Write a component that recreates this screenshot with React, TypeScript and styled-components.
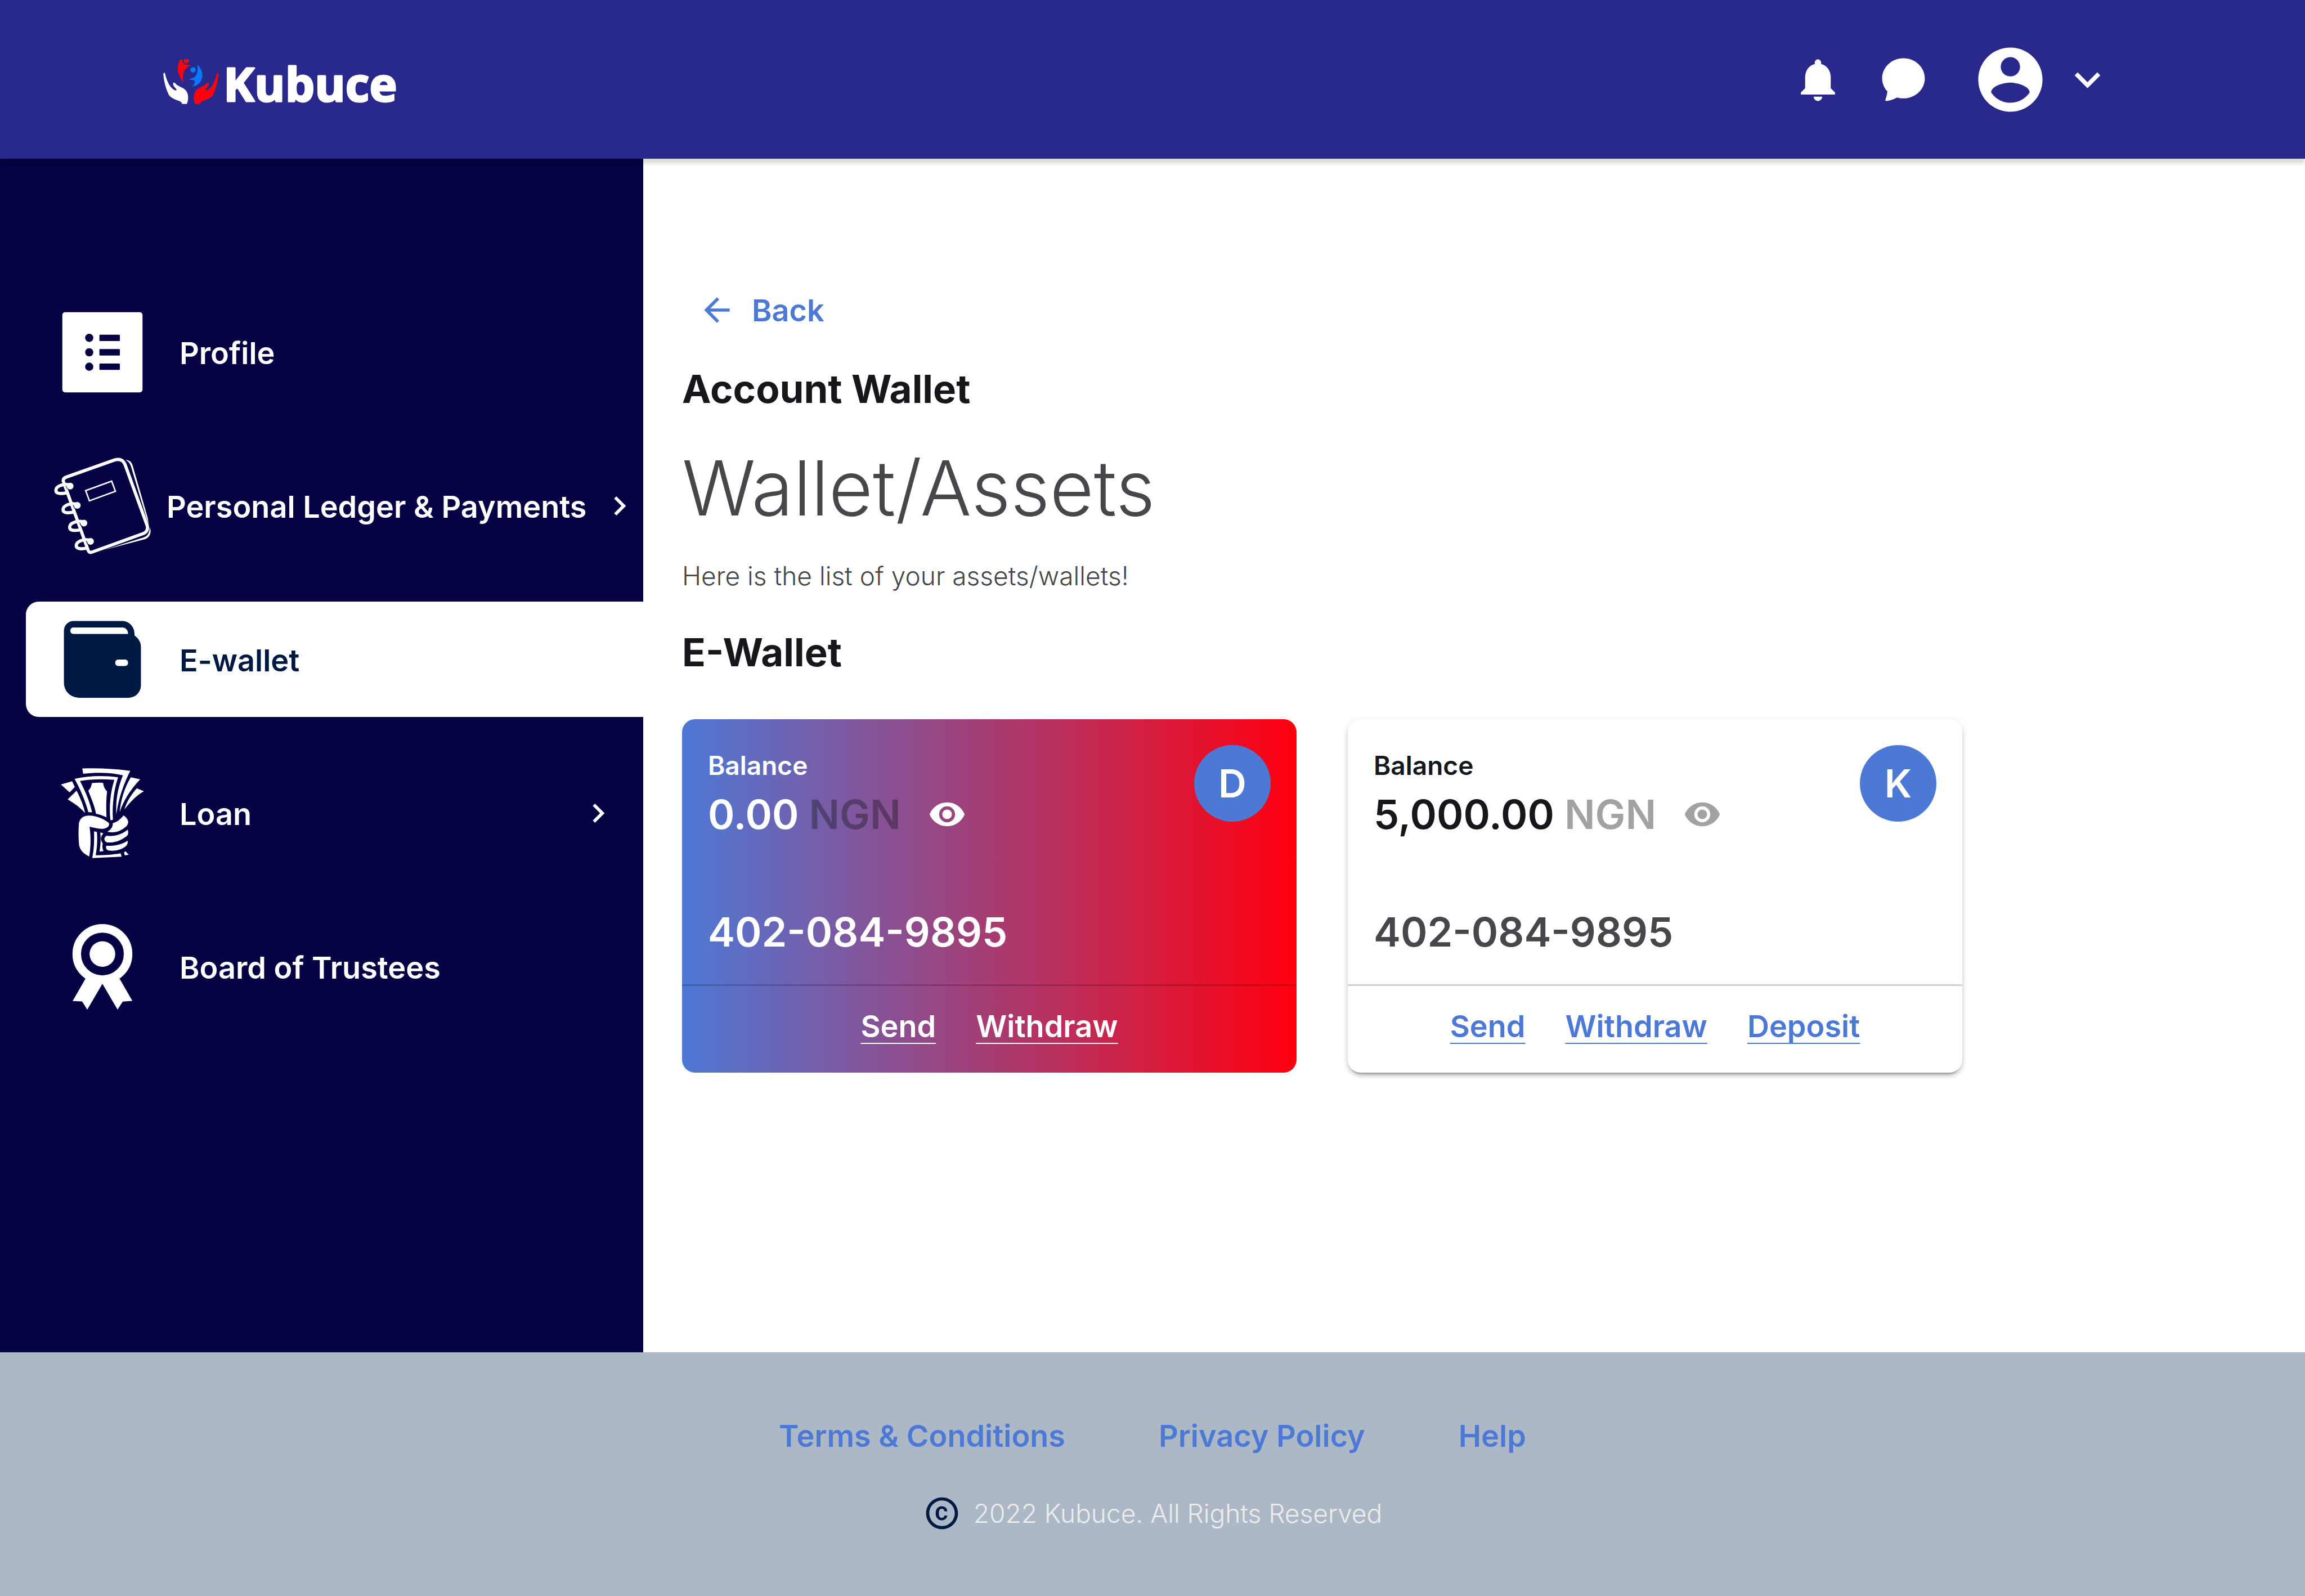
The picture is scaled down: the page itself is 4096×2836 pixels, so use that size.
import React from "react";
import styled, { createGlobalStyle, css } from "styled-components";

const color = {
  header: "#29288d",
  sidebar: "#050344",
  navy: "#001943",
  link: "#4d79d6",
  ink: "#16171b",
  body: "#46474b",
  muted: "rgba(22, 23, 27, 0.4)",
  footer: "#adb8c6",
  copyright: "#ececec",
  red: "#ff000f",
};

const font = { display: "135px", amount: "72px", title: "69px", label: "54px", text: "46px" };

const GlobalStyle = createGlobalStyle`
  *, *::before, *::after { box-sizing: border-box; }
  body {
    margin: 0;
    background: #fff;
    color: ${color.ink};
    font-family: Inter, "Liberation Sans", sans-serif;
  }
  h1, h2, p { margin: 0; }
  a { color: inherit; text-decoration: none; }
  button { border: 0; padding: 0; background: none; color: inherit; font: inherit; cursor: pointer; }
  svg { display: block; flex: none; }
`;

const Page = styled.div`
  display: flex;
  flex-direction: column;
  min-height: 100vh;
`;

const Header = styled.header`
  position: relative;
  z-index: 1;
  display: flex;
  align-items: center;
  justify-content: space-between;
  height: 282px;
  padding: 0 341px 0 290px;
  background: ${color.header};
  color: #fff;
  box-shadow: 0 8px 6px rgba(0, 0, 0, 0.15);
`;

const Brand = styled.a`
  display: flex;
  padding-top: 8px;
`;

const HeaderActions = styled.div`
  display: flex;
  align-items: center;
  gap: 61px;
`;

const IconButton = styled.button`
  display: flex;
`;

const AccountButton = styled.button`
  display: flex;
  align-items: center;
  gap: 23px;
  margin-left: 15px;
`;

const Body = styled.div`
  display: flex;
  flex: 1;
`;

const Sidebar = styled.nav`
  display: flex;
  flex: none;
  flex-direction: column;
  gap: 68px;
  width: 1143px;
  padding: 241px 0 68px 46px;
  background: ${color.sidebar};
`;

const NavItem = styled.a<{ $active?: boolean; $tight?: boolean }>`
  display: flex;
  align-items: center;
  gap: ${(p) => (p.$tight ? "19px" : "42px")};
  height: 205px;
  padding: 0 ${(p) => (p.$tight ? "8px" : "46px")} 0 41px;
  border-radius: 23px 0 0 23px;
  color: #fff;
  font-size: ${font.label};
  font-weight: 600;
  white-space: nowrap;
  ${(p) =>
    p.$active &&
    css`
      background: #fff;
      color: ${color.navy};
    `}
  > svg:last-child {
    margin-left: auto;
  }
`;

const NavLabel = styled.span`
  padding-top: 4px;
`;

const Main = styled.main`
  flex: 1;
  min-width: 0;
  padding: 235px 68px 68px 69px;
`;

const BackLink = styled.a`
  display: inline-flex;
  align-items: center;
  gap: 28px;
  height: 68px;
  padding-left: 28px;
  color: ${color.link};
  font-size: ${font.label};
  font-weight: 600;
`;

const Heading = styled.h2`
  margin-top: 60px;
  font-size: ${font.title};
  font-weight: 700;
  line-height: 84px;
`;

const PageTitle = styled.h1`
  margin-top: 56px;
  color: ${color.body};
  font-size: ${font.display};
  font-weight: 300;
  line-height: 156px;
`;

const Intro = styled.p`
  margin-top: 44px;
  color: ${color.body};
  font-size: ${font.text};
  font-weight: 300;
  line-height: 68px;
`;

const Cards = styled.section`
  display: flex;
  flex-wrap: wrap;
  gap: 91px;
  margin-top: 77px;
`;

const Card = styled.article<{ $featured?: boolean }>`
  flex: 0 1 1092px;
  border-radius: 23px;
  background: #fff;
  box-shadow: 0 9px 3px -6px rgba(0, 0, 0, 0.2), 0 6px 6px rgba(0, 0, 0, 0.14),
    0 3px 14px rgba(0, 0, 0, 0.12);
  ${(p) =>
    p.$featured &&
    css`
      background: linear-gradient(90deg, ${color.link}, ${color.red});
      box-shadow: none;
      color: #fff;
    `}
`;

const CardTop = styled.div`
  display: flex;
  align-items: flex-start;
  justify-content: space-between;
  padding: 46px 46px 51px;
`;

const BalanceLabel = styled.p`
  font-size: ${font.text};
  font-weight: 600;
  line-height: 72px;
`;

const Amount = styled.div`
  display: flex;
  align-items: center;
  margin-top: 6px;
  font-size: ${font.amount};
  font-weight: 600;
  line-height: 90px;
`;

const Currency = styled.span`
  margin-left: 18px;
  color: ${color.muted};
`;

const EyeButton = styled.button<{ $light?: boolean }>`
  display: flex;
  margin-left: 48px;
  color: ${(p) => (p.$light ? "#fff" : color.muted)};
`;

const AccountNumber = styled.p<{ $light?: boolean }>`
  margin-top: 122px;
  color: ${(p) => (p.$light ? "#fff" : color.body)};
  font-size: ${font.amount};
  font-weight: 600;
  line-height: 84px;
`;

const Avatar = styled.div`
  display: flex;
  align-items: center;
  justify-content: center;
  width: 136px;
  height: 136px;
  border-radius: 50%;
  background: ${color.link};
  color: #fff;
  font-size: ${font.title};
  font-weight: 600;
`;

const CardActions = styled.div<{ $light?: boolean }>`
  display: flex;
  justify-content: center;
  gap: 71px;
  padding: 42px 46px 52px;
  border-top: 3px solid rgba(0, 0, 0, 0.18);
  color: ${(p) => (p.$light ? "#fff" : color.link)};
`;

const ActionLink = styled.a`
  font-size: ${font.label};
  font-weight: 600;
  line-height: 60px;
  text-decoration: underline;
  text-decoration-thickness: 2px;
  text-decoration-skip-ink: none;
  text-underline-offset: 10px;
`;

const Footer = styled.footer`
  display: flex;
  flex-direction: column;
  align-items: center;
  gap: 71px;
  padding: 117px 68px 113px;
  background: ${color.footer};
`;

const FooterLinks = styled.nav`
  display: flex;
  gap: 166px;
  color: ${color.link};
  font-size: ${font.label};
  font-weight: 600;
  line-height: 64px;
`;

const Copyright = styled.p`
  display: flex;
  align-items: center;
  gap: 22px;
  color: ${color.copyright};
  font-size: ${font.text};
  font-weight: 300;
  line-height: 68px;
  svg {
    color: ${color.navy};
  }
`;

const WordMark = styled.text`
  font-family: "Open Sans", sans-serif;
  font-size: 83px;
  font-weight: 700;
  fill: #fff;
  stroke: #fff;
  stroke-width: 3;
  stroke-linejoin: round;
`;

const paths = {
  bell: "M12 22c1.1 0 2-.9 2-2h-4c0 1.1.89 2 2 2zm6-6v-5c0-3.07-1.64-5.64-4.5-6.32V4c0-.83-.67-1.5-1.5-1.5s-1.5.67-1.5 1.5v.68C7.63 5.36 6 7.92 6 11v5l-2 2v1h16v-1l-2-2z",
  chat: "M12 2c5.5 0 10 4.2 10 9.4s-4.5 9.4-10 9.4c-1 0-2.2-.1-3-.4-1.5.9-3.5 1.5-5 1.6-.4 0-.6-.3-.5-.6.5-1.1.8-2.4.95-3.9C3 16 2 13.8 2 11.4 2 6.2 6.5 2 12 2z",
  account:
    "M12 2C6.48 2 2 6.48 2 12s4.48 10 10 10 10-4.48 10-10S17.52 2 12 2zm0 3c1.66 0 3 1.34 3 3s-1.34 3-3 3-3-1.34-3-3 1.34-3 3-3zm0 14.2c-2.5 0-4.71-1.28-6-3.22.03-1.99 4-3.08 6-3.08 1.99 0 5.97 1.09 6 3.08-1.29 1.94-3.5 3.22-6 3.22z",
  down: "M16.59 8.59L12 13.17 7.41 8.59 6 10l6 6 6-6z",
  right: "M10 6L8.59 7.41 13.17 12l-4.58 4.59L10 18l6-6z",
  back: "M20 11H7.83l5.59-5.59L12 4l-8 8 8 8 1.41-1.41L7.83 13H20v-2z",
  eye: "M12 4.5C7 4.5 2.73 7.61 1 12c1.73 4.39 6 7.5 11 7.5s9.27-3.11 11-7.5c-1.73-4.39-6-7.5-11-7.5zM12 17c-2.76 0-5-2.24-5-5s2.24-5 5-5 5 2.24 5 5-2.24 5-5 5zm0-8c-1.66 0-3 1.34-3 3s1.34 3 3 3 3-1.34 3-3-1.34-3-3-3z",
  copyright:
    "M10.08 10.86c.05-.33.16-.62.3-.87s.34-.46.59-.62c.24-.15.54-.22.91-.23.23.01.44.05.63.13.2.09.38.21.52.36s.25.33.34.53.13.42.14.64h1.79c-.02-.47-.11-.9-.28-1.29s-.4-.73-.7-1.01-.66-.5-1.08-.66-.88-.23-1.39-.23c-.65 0-1.22.11-1.7.34s-.88.53-1.2.92-.56.84-.71 1.36S8 11.29 8 11.87v.27c0 .58.08 1.12.23 1.64s.39.97.71 1.35.72.69 1.2.91 1.05.34 1.7.34c.47 0 .91-.08 1.32-.23s.77-.36 1.08-.63.56-.58.74-.94.29-.74.3-1.15h-1.79c-.01.21-.06.4-.15.58s-.21.33-.36.46-.32.23-.52.3c-.19.07-.39.09-.6.1-.36-.01-.66-.08-.89-.23-.25-.16-.45-.37-.59-.62s-.25-.55-.3-.88-.08-.67-.08-1v-.27c0-.35.03-.68.08-1.01zM12 2C6.48 2 2 6.48 2 12s4.48 10 10 10 10-4.48 10-10S17.52 2 12 2zm0 18c-4.41 0-8-3.59-8-8s3.59-8 8-8 8 3.59 8 8-3.59 8-8 8z",
};

function Icon({ name, size }: { name: keyof typeof paths; size: number }) {
  return (
    <svg width={size} height={size} viewBox="0 0 24 24" fill="currentColor" aria-hidden="true">
      <path d={paths[name]} />
    </svg>
  );
}

function Hand({ fill, mirrored }: { fill: string; mirrored?: boolean }) {
  return (
    <path
      fill={fill}
      transform={mirrored ? "translate(469 0) scale(-1 1)" : undefined}
      d="M79 180C78 168 87 165 89 175C94 199 104 224 115 241C125 256 136 266 148 269C156 268 154 264 149 258C138 247 132 236 134 227C139 220 147 229 155 238C175 250 203 258 212 278C222 300 220 328 211 345H185C183 336 175 331 165 327C145 320 121 310 110 294C93 260 82 216 79 180Z"
    />
  );
}

function Logo() {
  return (
    <svg width="430" height="120" viewBox="0 -20 430 120" role="img" aria-label="Kubuce">
      <svg x="0" y="0" width="99" height="80" viewBox="78 93 314 252">
        <Hand fill="#fff" />
        <Hand fill={color.red} mirrored />
        <path
          fill={color.red}
          d="M176 93H185C184 107 190 118 203 122C213 125 222 123 232 127C212 138 196 154 190 178C187 196 190 212 192 228C178 200 161 178 160 150C160 128 165 108 176 93Z"
        />
        <circle cx="208" cy="101" r="15" fill={color.red} />
        <circle cx="246" cy="153" r="15" fill="#087aff" />
        <path
          fill="#087aff"
          d="M271 124C287 140 299 160 299 186C298 220 272 242 241 248C250 238 257 228 257 219C254 207 240 211 224 206C236 200 250 200 260 188C272 172 274 148 271 124Z"
        />
      </svg>
      <WordMark x="107" y="75">
        Kubuce
      </WordMark>
    </svg>
  );
}

const NAV_ICON = 190;

function ProfileIcon() {
  return (
    <svg width={NAV_ICON} height={NAV_ICON} viewBox="36 0 600 600" aria-hidden="true">
      <rect x="111" y="75" width="450" height="450" rx="16" fill="currentColor" />
      {[219, 300, 381].map((y) => (
        <g key={y} fill={color.sidebar}>
          <circle cx="262" cy={y} r="23" />
          <rect x="319" y={y - 18} width="115" height="36" rx="4" />
        </g>
      ))}
    </svg>
  );
}

function LedgerIcon() {
  const rings = [
    [0, 0],
    [40, 108],
    [77, 207],
    [114, 310],
  ];
  return (
    <svg width={NAV_ICON} height={NAV_ICON} viewBox="36 864 600 600" fill="none" stroke="currentColor" aria-hidden="true">
      <path
        strokeWidth="18"
        d="M116 1024C115 1012 120 1007 131 1003L405 906C432 898 453 906 463 932L587 1274C593 1295 585 1311 565 1319L275 1424C264 1427 260 1424 256 1413Z"
      />
      <path fill="currentColor" stroke="none" d="M466 906C491 906 502 922 507 942L590 1230L597 1272L583 1232L497 945C492 928 482 914 466 906Z" />
      <path fill="currentColor" stroke="none" d="M601 1284C607 1296 608 1310 604 1320C598 1338 586 1348 570 1352L345 1411L567 1341C587 1334 601 1318 601 1284Z" />
      <path strokeWidth="8" d="M242 1078L388 1025L409 1082L263 1135Z" />
      {rings.map(([x, y]) => (
        <g key={y} transform={`translate(${x} ${y})`}>
          <path strokeWidth="18" d="M150 1046C118 1038 75 1052 75 1077C75 1098 110 1096 134 1091" />
          <circle cx="155" cy="1053" r="19" fill="currentColor" stroke="none" />
          <path strokeWidth="3" stroke={color.sidebar} d="M131 1050L139 1070" />
        </g>
      ))}
    </svg>
  );
}

function WalletIcon() {
  return (
    <svg width={NAV_ICON} height={NAV_ICON} viewBox="92 1136 200 200" fill="currentColor" aria-hidden="true">
      <path
        fillRule="evenodd"
        d="M138 1164H229C242 1164 252 1175 252 1188V1191C259.5 1196 264 1204 264 1212V1284C264 1297 254 1307.5 241 1307.5H149C133 1307.5 120 1296 120 1279V1182C120 1172 128 1164 138 1164ZM138 1176C134 1176 132 1178.5 132 1182S134 1188 138 1188H240C240 1181 235.5 1176 229 1176ZM222 1236C218 1236 216 1238.5 216 1242S218 1248 222 1248H234C238 1248 240 1245.5 240 1242S238 1236 234 1236Z"
      />
    </svg>
  );
}

function LoanIcon() {
  return (
    <svg width={NAV_ICON} height={NAV_ICON} viewBox="-24 42 600 600" fill="currentColor" aria-hidden="true">
      <path d="M163 91C260 88 350 93 432 104C397 175 368 250 354 348C350 270 362 200 391 130C320 112 240 113 168 121Z" />
      <path d="M120 149C200 131 290 130 364 141C340 210 330 300 335 378L321 382C312 300 322 220 343 155C280 149 210 150 150 161C178 215 205 275 218 337L197 336C180 270 150 205 120 149Z" />
      <path d="M217 173C240 170 260 170 280 172C282 192 290 208 302 220C296 270 297 320 299 365C280 355 260 349 240 345C232 300 213 260 197 216C208 204 215 190 217 173Z" />
      <path d="M43 181L106 163L121 195L92 225Z" />
      <path d="M131 216C152 256 170 300 179 341C150 310 120 288 81 265Z" />
      <path d="M435 141L488 152C430 215 395 270 373 336C378 270 400 200 435 141Z" />
      <path d="M469 202L509 219C470 240 430 280 400 321C412 275 440 235 469 202Z" />
      <path d="M190 356C230 350 290 375 311 396C322 412 300 432 270 430C245 428 225 423 204 418C212 480 211 530 202 585C170 570 150 550 145 520C141 480 141 440 144 400C148 375 165 358 190 356Z" />
      <path d="M395 355C410 365 419 378 421 390C419 405 415 412 405 420C375 445 340 455 304 446C325 432 335 420 334 398C360 392 378 375 395 355Z" />
      <path d="M418 434C422 445 421 456 418 465C390 490 350 510 303 506C283 500 282 476 300 468C345 475 385 460 418 434Z" />
      <path d="M417 497C420 508 417 516 410 524C385 548 345 556 310 551C296 545 294 535 298 524C345 528 385 518 417 497Z" />
      <path d="M229 444L245 447C249 490 246 540 238 578C290 578 335 575 378 567L384 586L219 594C229 545 231 495 229 444Z" />
      <path d="M264 450L281 454L275 463C264 480 266 497 278 512C275 525 275 542 282 555L260 557C266 520 268 485 264 450Z" />
      <path d="M405 555L424 575L402 579L397 563Z" />
    </svg>
  );
}

function TrusteesIcon() {
  return (
    <svg width={NAV_ICON} height={NAV_ICON} viewBox="36 36 600 600" fill="currentColor" aria-hidden="true">
      <circle cx="336" cy="264" r="144" fill="none" stroke="currentColor" strokeWidth="48" />
      <circle cx="336" cy="264" r="72" />
      <path d="M241 402L169 528L222 530L251 576L336 431L421 576L450 531L504 527L432 402C376 430 296 430 241 402Z" />
    </svg>
  );
}

type WalletProps = {
  featured?: boolean;
  amount: string;
  initial: string;
  actions: string[];
};

function WalletCard({ featured, amount, initial, actions }: WalletProps) {
  return (
    <Card $featured={featured}>
      <CardTop>
        <div>
          <BalanceLabel>Balance</BalanceLabel>
          <Amount>
            {amount}
            <Currency>NGN</Currency>
            <EyeButton type="button" $light={featured} aria-label="Toggle balance">
              <Icon name="eye" size={68} />
            </EyeButton>
          </Amount>
          <AccountNumber $light={featured}>402-084-9895</AccountNumber>
        </div>
        <Avatar>{initial}</Avatar>
      </CardTop>
      <CardActions $light={featured}>
        {actions.map((action) => (
          <ActionLink key={action} href="#">
            {action}
          </ActionLink>
        ))}
      </CardActions>
    </Card>
  );
}

export default function App() {
  return (
    <Page>
      <GlobalStyle />
      <Header>
        <Brand href="#">
          <Logo />
        </Brand>
        <HeaderActions>
          <IconButton type="button" aria-label="Notifications">
            <Icon name="bell" size={91} />
          </IconButton>
          <IconButton type="button" aria-label="Messages">
            <Icon name="chat" size={91} />
          </IconButton>
          <AccountButton type="button" aria-label="Account menu">
            <Icon name="account" size={137} />
            <Icon name="down" size={91} />
          </AccountButton>
        </HeaderActions>
      </Header>
      <Body>
        <Sidebar>
          <NavItem href="#">
            <ProfileIcon />
            <NavLabel>Profile</NavLabel>
          </NavItem>
          <NavItem href="#" $tight>
            <LedgerIcon />
            <NavLabel>Personal Ledger &amp; Payments</NavLabel>
            <Icon name="right" size={68} />
          </NavItem>
          <NavItem href="#" $active>
            <WalletIcon />
            <NavLabel>E-wallet</NavLabel>
          </NavItem>
          <NavItem href="#">
            <LoanIcon />
            <NavLabel>Loan</NavLabel>
            <Icon name="right" size={68} />
          </NavItem>
          <NavItem href="#">
            <TrusteesIcon />
            <NavLabel>Board of Trustees</NavLabel>
          </NavItem>
        </Sidebar>
        <Main>
          <BackLink href="#">
            <Icon name="back" size={68} />
            Back
          </BackLink>
          <Heading>Account Wallet</Heading>
          <PageTitle>Wallet/Assets</PageTitle>
          <Intro>Here is the list of your assets/wallets!</Intro>
          <Heading>E-Wallet</Heading>
          <Cards>
            <WalletCard featured amount="0.00" initial="D" actions={["Send", "Withdraw"]} />
            <WalletCard amount="5,000.00" initial="K" actions={["Send", "Withdraw", "Deposit"]} />
          </Cards>
        </Main>
      </Body>
      <Footer>
        <FooterLinks>
          <a href="#">Terms &amp; Conditions</a>
          <a href="#">Privacy Policy</a>
          <a href="#">Help</a>
        </FooterLinks>
        <Copyright>
          <Icon name="copyright" size={68} />
          2022 Kubuce. All Rights Reserved
        </Copyright>
      </Footer>
    </Page>
  );
}
